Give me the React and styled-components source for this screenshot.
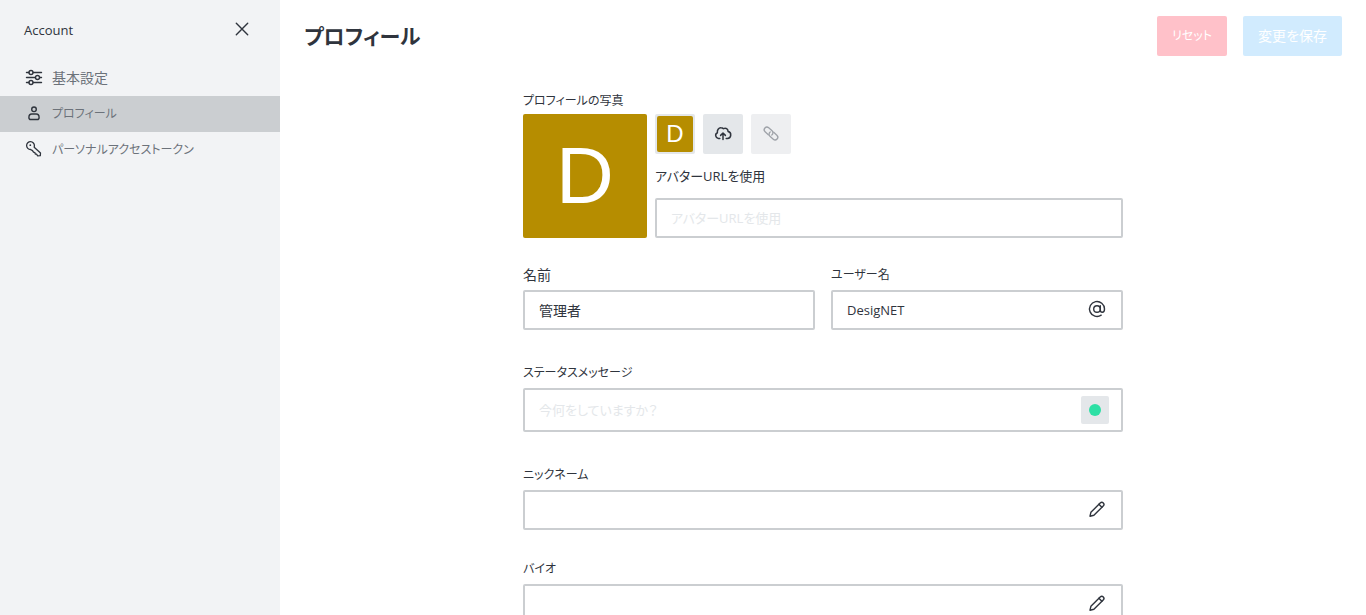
import React, { useState } from 'react';
import styled, { createGlobalStyle } from 'styled-components';

const GlobalStyle = createGlobalStyle`
  *, *::before, *::after {
    box-sizing: border-box;
  }

  body {
    margin: 0;
    overflow: hidden;
    background: #fff;
    color: #2f343d;
    font-family: 'Open Sans', 'Noto Sans CJK JP', sans-serif;
    font-size: 14px;
    line-height: 20px;
    font-feature-settings: 'palt';
  }

  button, input {
    font: inherit;
    font-feature-settings: inherit;
    color: inherit;
  }
`;

const Layout = styled.div`
  display: flex;
  height: 100vh;
`;

const Sidebar = styled.aside`
  flex: 0 0 280px;
  background: #f2f3f5;
`;

const SidebarHeader = styled.div`
  display: flex;
  align-items: center;
  justify-content: space-between;
  height: 60px;
  padding: 0 28px 0 24px;
  font-size: 13px;
`;

const CloseButton = styled.button`
  display: flex;
  padding: 0;
  border: 0;
  background: none;
  cursor: pointer;
`;

const NavItem = styled.a`
  display: flex;
  align-items: center;
  gap: 8px;
  height: 36px;
  padding: 0 24px;
  background: ${props => (props.$active ? '#cbced1' : 'transparent')};
  color: #6c727a;
  font-size: ${props => (props.$kana ? 12 : 14)}px;
  text-decoration: none;

  svg {
    color: #2f343d;
  }
`;

const Main = styled.main`
  flex: 1;
  min-width: 0;
  overflow: hidden;
`;

const PageHeader = styled.header`
  display: flex;
  align-items: center;
  justify-content: space-between;
  padding: 16px 24px;
`;

const Title = styled.h1`
  margin: 0;
  font-size: 21px;
  line-height: 32px;
  font-weight: 700;
`;

const Actions = styled.div`
  display: flex;
  gap: 16px;
`;

const ActionButton = styled.button`
  height: 40px;
  padding: 0 15px;
  border: 0;
  border-radius: 2px;
  background: ${props => (props.$danger ? '#ffc1c9' : '#d1ebfe')};
  color: #fff;
  font-size: ${props => (props.$danger ? 12 : 14)}px;
`;

const Form = styled.form`
  max-width: 600px;
  margin: 19px auto 0;
`;

const SectionLabel = styled.div`
  margin-bottom: 3px;
  font-size: 12px;
`;

const Label = styled.label`
  display: block;
  margin-bottom: 5px;
  font-size: ${props => (props.$kana ? 12 : 14)}px;
`;

const Field = styled.div`
  flex: 1;
  margin-bottom: ${props => props.$gap || 33}px;
`;

const FieldRow = styled.div`
  display: flex;
  gap: 16px;
`;

const AvatarRow = styled.div`
  display: flex;
  gap: 8px;
  margin-bottom: 27px;
`;

const Avatar = styled.div`
  display: flex;
  align-items: center;
  justify-content: center;
  width: ${props => props.$size}px;
  height: ${props => props.$size}px;
  border-radius: 2px;
  background: #b68d00;
  color: #fff;
  font-family: 'Liberation Sans', sans-serif;
  font-size: ${props => props.$fontSize}px;
  line-height: 1;
`;

const AvatarOptions = styled.div`
  display: flex;
  flex: 1;
  flex-direction: column;
  justify-content: space-between;
`;

const AvatarButtons = styled.div`
  display: flex;
  gap: 8px;
`;

const SquareButton = styled.button`
  display: flex;
  align-items: center;
  justify-content: center;
  width: ${props => props.$size || 40}px;
  height: ${props => props.$size || 40}px;
  padding: 0;
  border: 0;
  border-radius: 2px;
  background: #e4e7ea;

  &:disabled {
    background: #eeeff1;
    color: #9ea2a8;
  }
`;

const UrlLabel = styled.label`
  display: block;
  font-size: 13px;
`;

const InputBox = styled.div`
  display: flex;
  align-items: center;
  height: ${props => (props.$tall ? 44 : 40)}px;
  padding: 0 ${props => (props.$tall ? 12 : 14)}px 0 14px;
  border: 2px solid #cbced1;
  border-radius: 2px;
  background: #fff;
`;

const Input = styled.input`
  flex: 1;
  min-width: 0;
  height: 100%;
  padding: 0;
  border: 0;
  outline: 0;
  background: none;
  font-size: ${props => (props.$small ? 13 : 14)}px;

  &::placeholder {
    color: #e4e7ea;
    opacity: 1;
  }
`;

const StatusDot = styled.span`
  width: 12px;
  height: 12px;
  border-radius: 50%;
  background: #2de0a5;
`;

const Icon = ({ children, strokeWidth = 1.4 }) => (
  <svg
    width="20"
    height="20"
    viewBox="0 0 20 20"
    fill="none"
    stroke="currentColor"
    strokeWidth={strokeWidth}
    strokeLinecap="round"
    strokeLinejoin="round"
    aria-hidden="true"
  >
    {children}
  </svg>
);

const CrossIcon = () => (
  <Icon>
    <path d="M4.3 3.3l11.4 11.4M15.7 3.3L4.3 14.7" />
  </Icon>
);

const SlidersIcon = () => (
  <Icon>
    <path d="M2.5 4.5h2.4M9.3 4.5h8.2M2.5 9.5h8.7M15.6 9.5h1.9M2.5 14.5h2.4M9.3 14.5h8.2" />
    <circle cx="7" cy="4.5" r="2" />
    <circle cx="13.5" cy="9.5" r="2" />
    <circle cx="7" cy="14.5" r="2" />
  </Icon>
);

const UserIcon = () => (
  <Icon>
    <circle cx="10" cy="5.3" r="2.3" />
    <path d="M7.8 10h4.400c1.700 0 2.900 1.500 2.900 3.400 0 1.300-.6 2.100-1.800 2.100H6.700c-1.200 0-1.800-.8-1.800-2.100C4.900 11.500 6.100 10 7.800 10z" />
  </Icon>
);

const KeyIcon = () => (
  <Icon strokeWidth={1.3}>
    <path d="M6.600 9.500a3.900 3.900 0 1 1 3.800-3.700l-.2 1.400 6.300 5.800-.2 2.600-2.600.2-1.200-1.600-1.200-.2-.4-1.400-1.400-.4-1-1.600z" />
    <circle cx="6.300" cy="5.200" r=".9" fill="currentColor" stroke="none" />
  </Icon>
);

const CloudUploadIcon = () => (
  <Icon strokeWidth={1.5}>
    <path d="M6.800 14.400H5.400a3 3 0 0 1-1-5.700C4 6 5.600 3.700 8 3.800c1 0 1.800.3 2.400.9 2.400-1.300 4.700.3 4.700 2.900a3.450 3.450 0 0 1-.7 6.800h-1.200" />
    <path d="M10 15.600V9.400M7.600 11.400L10 9l2.400 2.400" />
  </Icon>
);

const LinkIcon = () => (
  <Icon strokeWidth={1.3}>
    <g transform="translate(10 9.500) rotate(42)">
      <path d="M-1.200 2.700H-5.500a2.700 2.700 0 0 1 0-5.400H-1a2.700 2.700 0 0 1 2.600 3.300" />
      <path d="M1.200-2.700H5.500a2.700 2.700 0 0 1 0 5.400H1a2.700 2.700 0 0 1-2.600-3.300" />
    </g>
  </Icon>
);

const AtIcon = () => (
  <Icon>
    <circle cx="10" cy="9" r="3.300" />
    <path d="M13.300 5.800V10c0 1.500.8 2.300 1.900 2.300 1.400 0 2.300-1.200 2.300-3.300a7.500 7.500 0 1 0-3.300 6.200" />
  </Icon>
);

const PencilIcon = () => (
  <Icon>
    <path d="M3 16.200l.9-3.900 9.300-9.300c1-1 2.200-1 3.100-.1s.9 2.100-.1 3.100l-9.300 9.300z" />
    <path d="M11.900 4.300l3 3" />
  </Icon>
);

const navItems = [
  { id: 'preferences', label: '基本設定', icon: SlidersIcon },
  { id: 'profile', label: 'プロフィール', icon: UserIcon, kana: true },
  { id: 'tokens', label: 'パーソナルアクセストークン', icon: KeyIcon, kana: true }
];

const App = () => {
  const [values, setValues] = useState({
    avatarUrl: '',
    name: '管理者',
    username: 'DesigNET',
    status: '',
    nickname: '',
    bio: ''
  });

  const bind = (key) => ({
    id: key,
    value: values[key],
    onChange: (e) => setValues({ ...values, [key]: e.target.value })
  });

  return (
    <Layout>
      <GlobalStyle />
      <Sidebar>
        <SidebarHeader>
          <span>Account</span>
          <CloseButton aria-label="閉じる">
            <CrossIcon />
          </CloseButton>
        </SidebarHeader>
        <nav>
          {navItems.map(({ id, label, icon: ItemIcon, kana }) => (
            <NavItem key={id} href={`#${id}`} $active={id === 'profile'} $kana={kana}>
              <ItemIcon />
              {label}
            </NavItem>
          ))}
        </nav>
      </Sidebar>

      <Main>
        <PageHeader>
          <Title>プロフィール</Title>
          <Actions>
            <ActionButton $danger disabled>リセット</ActionButton>
            <ActionButton disabled>変更を保存</ActionButton>
          </Actions>
        </PageHeader>

        <Form onSubmit={(e) => e.preventDefault()}>
          <SectionLabel>プロフィールの写真</SectionLabel>
          <AvatarRow>
            <Avatar $size={124} $fontSize={80}>D</Avatar>
            <AvatarOptions>
              <AvatarButtons>
                <SquareButton type="button">
                  <Avatar $size={36} $fontSize={24}>D</Avatar>
                </SquareButton>
                <SquareButton type="button" aria-label="アップロード">
                  <CloudUploadIcon />
                </SquareButton>
                <SquareButton type="button" aria-label="URLを追加" disabled>
                  <LinkIcon />
                </SquareButton>
              </AvatarButtons>
              <UrlLabel htmlFor="avatarUrl">アバターURLを使用</UrlLabel>
              <InputBox>
                <Input {...bind('avatarUrl')} $small placeholder="アバターURLを使用" />
              </InputBox>
            </AvatarOptions>
          </AvatarRow>

          <FieldRow>
            <Field>
              <Label htmlFor="name">名前</Label>
              <InputBox>
                <Input {...bind('name')} />
              </InputBox>
            </Field>
            <Field>
              <Label htmlFor="username" $kana>ユーザー名</Label>
              <InputBox>
                <Input {...bind('username')} $small />
                <AtIcon />
              </InputBox>
            </Field>
          </FieldRow>

          <Field>
            <Label htmlFor="status" $kana>ステータスメッセージ</Label>
            <InputBox $tall>
              <Input {...bind('status')} $small placeholder="今何をしていますか？" />
              <SquareButton type="button" $size={28} aria-label="オンライン">
                <StatusDot />
              </SquareButton>
            </InputBox>
          </Field>

          <Field $gap={29}>
            <Label htmlFor="nickname" $kana>ニックネーム</Label>
            <InputBox>
              <Input {...bind('nickname')} />
              <PencilIcon />
            </InputBox>
          </Field>

          <Field>
            <Label htmlFor="bio" $kana>バイオ</Label>
            <InputBox>
              <Input {...bind('bio')} />
              <PencilIcon />
            </InputBox>
          </Field>
        </Form>
      </Main>
    </Layout>
  );
};

export default App;
